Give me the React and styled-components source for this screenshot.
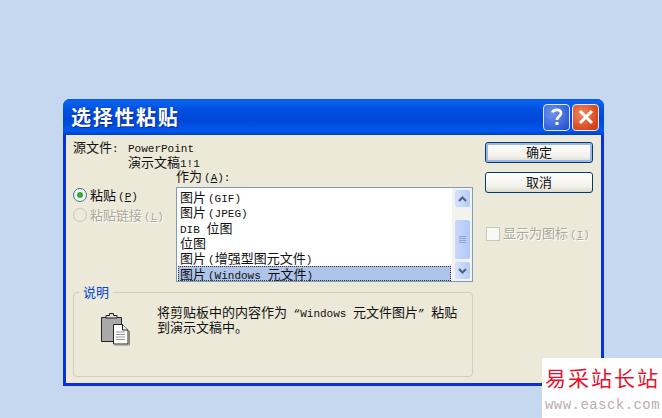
import styled, { createGlobalStyle } from "styled-components";

const GlobalStyle = createGlobalStyle`
  html, body {
    margin: 0;
    padding: 0;
    background: #c6d7f0;
    overflow: hidden;
  }
  body {
    font-family: "Noto Sans CJK SC", sans-serif;
    font-size: 13px;
    color: #111;
  }
`;

const Page = styled.div`
  position: relative;
  width: 662px;
  height: 418px;
  padding: 99px 0 0 63px;
  box-sizing: border-box;
`;

const Dialog = styled.div`
  width: 541px;
  height: 287px;
  display: flex;
  flex-direction: column;
  background: #0831d9;
  border-radius: 7px 7px 0 0;
  overflow: hidden;
`;

const TitleBar = styled.div`
  height: 36px;
  flex: none;
  display: flex;
  align-items: center;
  justify-content: space-between;
  padding: 0 5px 0 8px;
  box-sizing: border-box;
  background: linear-gradient(
    180deg,
    #0a5ae0 0%,
    #0a62f0 8%,
    #0050e0 30%,
    #0047d8 60%,
    #0058ee 88%,
    #0040c8 100%
  );
`;

const Title = styled.div`
  color: #fff;
  font-size: 20px;
  font-weight: 700;
  letter-spacing: 1.7px;
  line-height: 24px;
  text-shadow: 1px 1px 1px #0a2a90;
`;

const TitleButtons = styled.div`
  display: flex;
  gap: 2px;
`;

const CaptionButton = styled.div`
  width: 27px;
  height: 27px;
  box-sizing: border-box;
  border: 1px solid #dfe8fb;
  border-radius: 4px;
  display: flex;
  align-items: center;
  justify-content: center;
  background: ${(p) =>
    p.$close
      ? "radial-gradient(circle at 35% 35%, #ee8a60, #d8481f 70%, #c63a14)"
      : "radial-gradient(circle at 35% 35%, #6f93ee, #3560d8 70%, #2448c0)"};
`;

const Body = styled.div`
  flex: 1;
  min-height: 0;
  display: flex;
  margin: 0 3px 3px 3px;
  background: #ece9d8;
  padding: 5px 8px 6px 7px;
  gap: 12px;
`;

const Main = styled.div`
  width: 400px;
  display: flex;
  flex-direction: column;
`;

const SourceRow = styled.div`
  display: flex;
  height: 28px;
  flex: none;
  line-height: 14px;
`;

const SourceLabel = styled.div`
  width: 55px;
  flex: none;
`;

const Latin = styled.span`
  font-family: "Liberation Mono", monospace;
  font-size: 11px;
  line-height: 1;
  white-space: pre;
  margin-left: ${(p) => (p.$lead ? "2px" : "0")};
`;

const ChooseRow = styled.div`
  display: flex;
  height: 114px;
  flex: none;
`;

const RadioColumn = styled.div`
  width: 103px;
  flex: none;
  padding-top: 20px;
  display: flex;
  flex-direction: column;
  gap: 6px;
`;

const RadioRow = styled.div`
  display: flex;
  align-items: center;
  gap: 3px;
  height: 14px;
  line-height: 14px;
  color: ${(p) => (p.$disabled ? "#aca899" : "#111")};
  text-shadow: ${(p) => (p.$disabled ? "1px 1px 0 #fff" : "none")};
`;

const RadioDot = styled.div`
  width: 14px;
  height: 14px;
  flex: none;
  box-sizing: border-box;
  border-radius: 50%;
  border: 1px solid ${(p) => (p.$disabled ? "#c9c7ba" : "#3a6ea5")};
  background: ${(p) => (p.$disabled ? "#ece9d8" : "#f6f6f0")};
  display: flex;
  align-items: center;
  justify-content: center;
  &::after {
    content: "";
    display: ${(p) => (p.$checked ? "block" : "none")};
    width: 6px;
    height: 6px;
    border-radius: 50%;
    background: #37a93a;
  }
`;

const ListColumn = styled.div`
  flex: 1;
  display: flex;
  flex-direction: column;
`;

const ListLabel = styled.div`
  line-height: 14px;
  height: 18px;
  margin-top: 1px;
  flex: none;
`;

const ListBox = styled.div`
  width: 297px;
  height: 95px;
  flex: none;
  box-sizing: border-box;
  border: 1px solid #7f9db9;
  background: #fff;
  display: flex;
`;

const ListItems = styled.div`
  flex: 1;
  padding: 1px 1px 0 1px;
  display: flex;
  flex-direction: column;
  min-width: 0;
`;

const ListItem = styled.div`
  height: 15.4px;
  line-height: 15px;
  padding-left: 2px;
  white-space: nowrap;
  background: ${(p) => (p.$selected ? "#aec4e8" : "transparent")};
  outline: ${(p) => (p.$selected ? "1px dotted #333" : "none")};
  outline-offset: -1px;
`;

const ScrollBar = styled.div`
  width: 20px;
  flex: none;
  background: #f3f2ec;
  display: flex;
  flex-direction: column;
  padding: 1px 1px 1px 2px;
  box-sizing: border-box;
`;

const ScrollButton = styled.div`
  width: 17px;
  height: 19px;
  flex: none;
  box-sizing: border-box;
  border: 1px solid #eef3fd;
  border-radius: 3px;
  background: linear-gradient(90deg, #d6e2fb, #b6cbf6);
  display: flex;
  align-items: center;
  justify-content: center;
`;

const ScrollTrack = styled.div`
  flex: 1;
  display: flex;
  flex-direction: column;
  justify-content: flex-end;
  padding-bottom: 1px;
`;

const ScrollThumb = styled.div`
  width: 17px;
  height: 41px;
  box-sizing: border-box;
  border: 1px solid #eef3fd;
  border-radius: 3px;
  background: linear-gradient(90deg, #c8d8fa, #b2c8f8);
  display: flex;
  flex-direction: column;
  align-items: center;
  justify-content: center;
  gap: 1px;
  i {
    display: block;
    width: 7px;
    height: 1px;
    background: #8ca6dc;
  }
`;

const GroupBox = styled.div`
  position: relative;
  margin-top: 10px;
  width: 400px;
  height: 85px;
  flex: none;
  box-sizing: border-box;
  border: 1px solid #d0d0bf;
  border-radius: 4px;
  display: flex;
  padding: 12px 0 0 26px;
`;

const Legend = styled.div`
  position: absolute;
  left: 5px;
  top: -8px;
  padding: 0 4px;
  background: #ece9d8;
  color: #0046d5;
  line-height: 14px;
`;

const DescIcon = styled.div`
  width: 32px;
  height: 34px;
  flex: none;
  margin: 7px 25px 0 0;
`;

const DescText = styled.div`
  line-height: 14px;
  width: 302px;
`;

const Side = styled.div`
  width: 108px;
  display: flex;
  flex-direction: column;
  padding-top: 2px;
`;

const PushButton = styled.div`
  height: 21px;
  margin-bottom: 9px;
  flex: none;
  box-sizing: border-box;
  border: 1px solid #003c74;
  border-radius: 3px;
  background: linear-gradient(180deg, #fff 0%, #f2f1ea 70%, #dcdacd 100%);
  box-shadow: ${(p) => (p.$primary ? "inset 0 0 0 2px #9db8e8" : "none")};
  text-align: center;
  line-height: 18px;
`;

const CheckRow = styled.div`
  display: flex;
  align-items: center;
  gap: 3px;
  margin-top: 24px;
  margin-left: 1px;
  color: #aca899;
  text-shadow: 1px 1px 0 #fff;
  line-height: 14px;
  white-space: nowrap;
`;

const CheckBox = styled.div`
  width: 14px;
  height: 14px;
  flex: none;
  box-sizing: border-box;
  border: 1px solid #c9c7ba;
  background: #f8f8f4;
`;

const Watermark = styled.div`
  position: absolute;
  right: 0;
  bottom: 0;
  width: 120px;
  height: 60px;
  background: #fff;
  padding: 4px 0 0 3px;
  box-sizing: border-box;
`;

const WatermarkTitle = styled.div`
  color: #e8112d;
  font-size: 21px;
  letter-spacing: 2px;
  line-height: 30px;
  white-space: nowrap;
`;

const WatermarkUrl = styled.div`
  color: #b9aeb0;
  font-family: "Liberation Mono", monospace;
  font-size: 14px;
  letter-spacing: 0.45px;
  line-height: 16px;
  white-space: nowrap;
  margin-top: 5px;
`;

const Chevron = ({ up }) => (
  <svg width="11" height="8" viewBox="0 0 11 8">
    <path
      d={up ? "M2 6l3.5-3.5L9 6" : "M2 2l3.5 3.5L9 2"}
      fill="none"
      stroke="#4d6185"
      strokeWidth="2"
    />
  </svg>
);

const ClipboardIcon = () => (
  <svg width="32" height="34" viewBox="0 0 32 34">
    <path d="M1.500 5.500h20v24h-20z" fill="#a9a9a9" stroke="#222" strokeLinejoin="round" />
    <path d="M6 6V3.500h3.500V1.500h4v2H17V6z" fill="#ddd" stroke="#222" />
    <path d="M13.500 12.500h9l5.500 5.500v14h-14.500z" fill="#fff" stroke="#222" />
    <path d="M22.500 12.500v5.500h5.500" fill="#eee" stroke="#222" />
    <path d="M16 20h9M16 22.500h9M16 25h9M16 27.500h9" stroke="#999" />
    <path d="M14.500 33h15V19" fill="none" stroke="#888" />
  </svg>
);

const items = [
  <>图片<Latin $lead>(GIF)</Latin></>,
  <>图片<Latin $lead>(JPEG)</Latin></>,
  <><Latin>DIB </Latin>位图</>,
  <>位图</>,
  <>图片<Latin $lead>(</Latin>增强型图元文件<Latin>)</Latin></>,
  <>图片<Latin $lead>(Windows </Latin>元文件<Latin>)</Latin></>,
];

function App() {
  return (
    <Page>
      <GlobalStyle />
      <Dialog>
        <TitleBar>
          <Title>选择性粘贴</Title>
          <TitleButtons>
            <CaptionButton>
              <svg width="14" height="20" viewBox="0 0 14 20">
                <path
                  d="M2.500 5.500C3 2.500 11 1.500 11 6c0 3.500-4 3.500-4 7"
                  fill="none"
                  stroke="#fff"
                  strokeWidth="2.800"
                />
                <path d="M5.500 15h3v3h-3z" fill="#fff" />
              </svg>
            </CaptionButton>
            <CaptionButton $close>
              <svg width="18" height="18" viewBox="0 0 18 18">
                <path d="M3 3l12 12M15 3L3 15" stroke="#fff" strokeWidth="3" />
              </svg>
            </CaptionButton>
          </TitleButtons>
        </TitleBar>
        <Body>
          <Main>
            <SourceRow>
              <SourceLabel>
                源文件<Latin>:</Latin>
              </SourceLabel>
              <div>
                <Latin>PowerPoint</Latin>
                <br />
                演示文稿<Latin>1!1</Latin>
              </div>
            </SourceRow>
            <ChooseRow>
              <RadioColumn>
                <RadioRow>
                  <RadioDot $checked />
                  <span>
                    粘贴<Latin $lead>(<u>P</u>)</Latin>
                  </span>
                </RadioRow>
                <RadioRow $disabled>
                  <RadioDot $disabled />
                  <span>
                    粘贴链接<Latin $lead>(<u>L</u>)</Latin>
                  </span>
                </RadioRow>
              </RadioColumn>
              <ListColumn>
                <ListLabel>
                  作为<Latin $lead>(<u>A</u>):</Latin>
                </ListLabel>
                <ListBox>
                  <ListItems>
                    {items.map((item, idx) => (
                      <ListItem key={idx} $selected={idx === items.length - 1}>
                        {item}
                      </ListItem>
                    ))}
                  </ListItems>
                  <ScrollBar>
                    <ScrollButton>
                      <Chevron up />
                    </ScrollButton>
                    <ScrollTrack>
                      <ScrollThumb>
                        <i />
                        <i />
                        <i />
                        <i />
                      </ScrollThumb>
                    </ScrollTrack>
                    <ScrollButton>
                      <Chevron />
                    </ScrollButton>
                  </ScrollBar>
                </ListBox>
              </ListColumn>
            </ChooseRow>
            <GroupBox>
              <Legend>说明</Legend>
              <DescIcon>
                <ClipboardIcon />
              </DescIcon>
              <DescText>
                将剪贴板中的内容作为<Latin> “Windows </Latin>元文件图片<Latin>” </Latin>粘贴到演示文稿中。
              </DescText>
            </GroupBox>
          </Main>
          <Side>
            <PushButton $primary>确定</PushButton>
            <PushButton>取消</PushButton>
            <CheckRow>
              <CheckBox />
              <span>
                显示为图标<Latin $lead>(<u>I</u>)</Latin>
              </span>
            </CheckRow>
          </Side>
        </Body>
      </Dialog>
      <Watermark>
        <WatermarkTitle>易采站长站</WatermarkTitle>
        <WatermarkUrl>www.easck.com</WatermarkUrl>
      </Watermark>
    </Page>
  );
}

export default App;
